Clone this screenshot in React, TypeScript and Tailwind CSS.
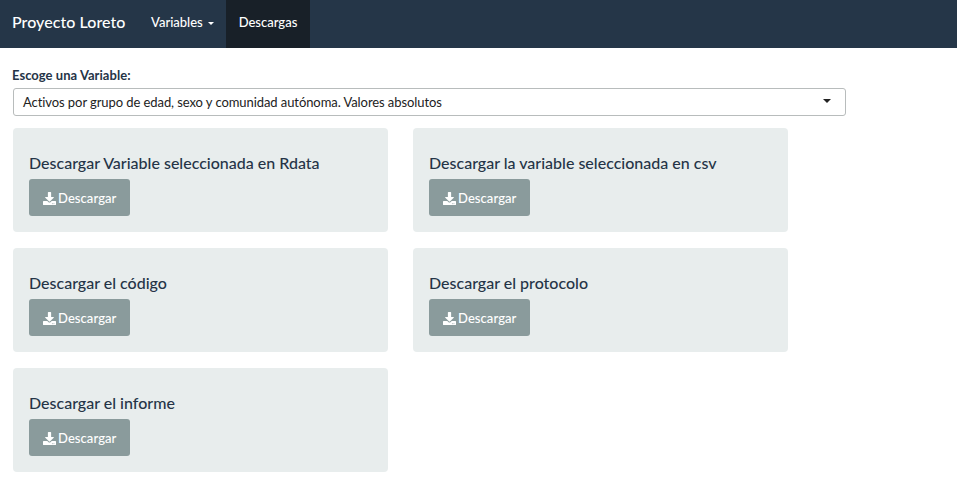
import React from "react";

function DownloadIcon() {
  return (
    <svg className="mr-[2px] mb-px h-[13px] w-[13px] shrink-0" viewBox="0 0 512 512" fill="currentColor">
      <path d="M216 0h80c13.300 0 24 10.700 24 24v168h87.700c17.800 0 26.700 21.500 14.100 34.100L269.700 378.300c-7.500 7.500-19.800 7.500-27.300 0L90.100 226.100c-12.600-12.600-3.700-34.100 14.100-34.100H192V24c0-13.300 10.700-24 24-24zm296 376v112c0 13.300-10.700 24-24 24H24c-13.300 0-24-10.700-24-24V376c0-13.300 10.700-24 24-24h146.700l49 49c20.100 20.100 52.500 20.100 72.600 0l49-49H488c13.300 0 24 10.700 24 24zm-124 88c0-11-9-20-20-20s-20 9-20 20 9 20 20 20 20-9 20-20zm64 0c0-11-9-20-20-20s-20 9-20 20 9 20 20 20 20-9 20-20z" />
    </svg>
  );
}

function Card({ title }: { title: string }) {
  return (
    <section className="h-[104px] w-[375px] rounded-[4px] bg-[#e8eded] px-4 pt-[26px]">
      <h4 className="mb-[7px] text-[16px] leading-[18px] font-medium">{title}</h4>
      <button className="flex h-[37px] w-[101px] items-center rounded-[3px] bg-[#8a9b9c] pt-[2px] pl-[14px] text-[13px] font-medium tracking-[0.08px] text-white">
        <DownloadIcon />
        Descargar
      </button>
    </section>
  );
}

const cards = [
  "Descargar Variable seleccionada en Rdata",
  "Descargar la variable seleccionada en csv",
  "Descargar el código",
  "Descargar el protocolo",
  "Descargar el informe",
];

export default function App() {
  return (
    <div className="h-[496px] w-full overflow-hidden bg-white font-['Lato',sans-serif] text-[13px] text-[#253447]">
      <nav className="flex h-[48px] bg-[#253648] font-medium text-white">
        <div className="w-[138px] pl-[12px] text-[16px] leading-[43px] tracking-[0.06px]">Proyecto Loreto</div>
        <div className="flex w-[88px] items-center pb-[3px] pl-[13px]">
          Variables
          <span className="ml-[5px] mt-[2px] border-x-[3px] border-t-[3px] border-x-transparent border-t-white" />
        </div>
        <div className="w-[84px] bg-[#182028] text-center leading-[45px]">Descargas</div>
      </nav>
      <main className="pl-[13px] pt-[18px]">
        <label className="-ml-px block text-[13px] leading-[18px] font-bold tracking-[0.04px]">Escoge una Variable:</label>
        <div className="mt-[4px] flex h-[28px] w-[833px] items-center justify-between rounded-[3px] border border-[#b8bcbc] pl-[9px] pr-[14px] text-[#222]">
          <span className="pt-[2px] tracking-[-0.075px]">Activos por grupo de edad, sexo y comunidad autónoma. Valores absolutos</span>
          <span className="mb-[2px] border-x-[4px] border-t-[4px] border-x-transparent border-t-[#222]" />
        </div>
        <div className="mt-[12px] grid w-[775px] grid-cols-[375px_375px] gap-x-[25px] gap-y-4">
          {cards.map((title) => (
            <Card key={title} title={title} />
          ))}
        </div>
      </main>
    </div>
  );
}
